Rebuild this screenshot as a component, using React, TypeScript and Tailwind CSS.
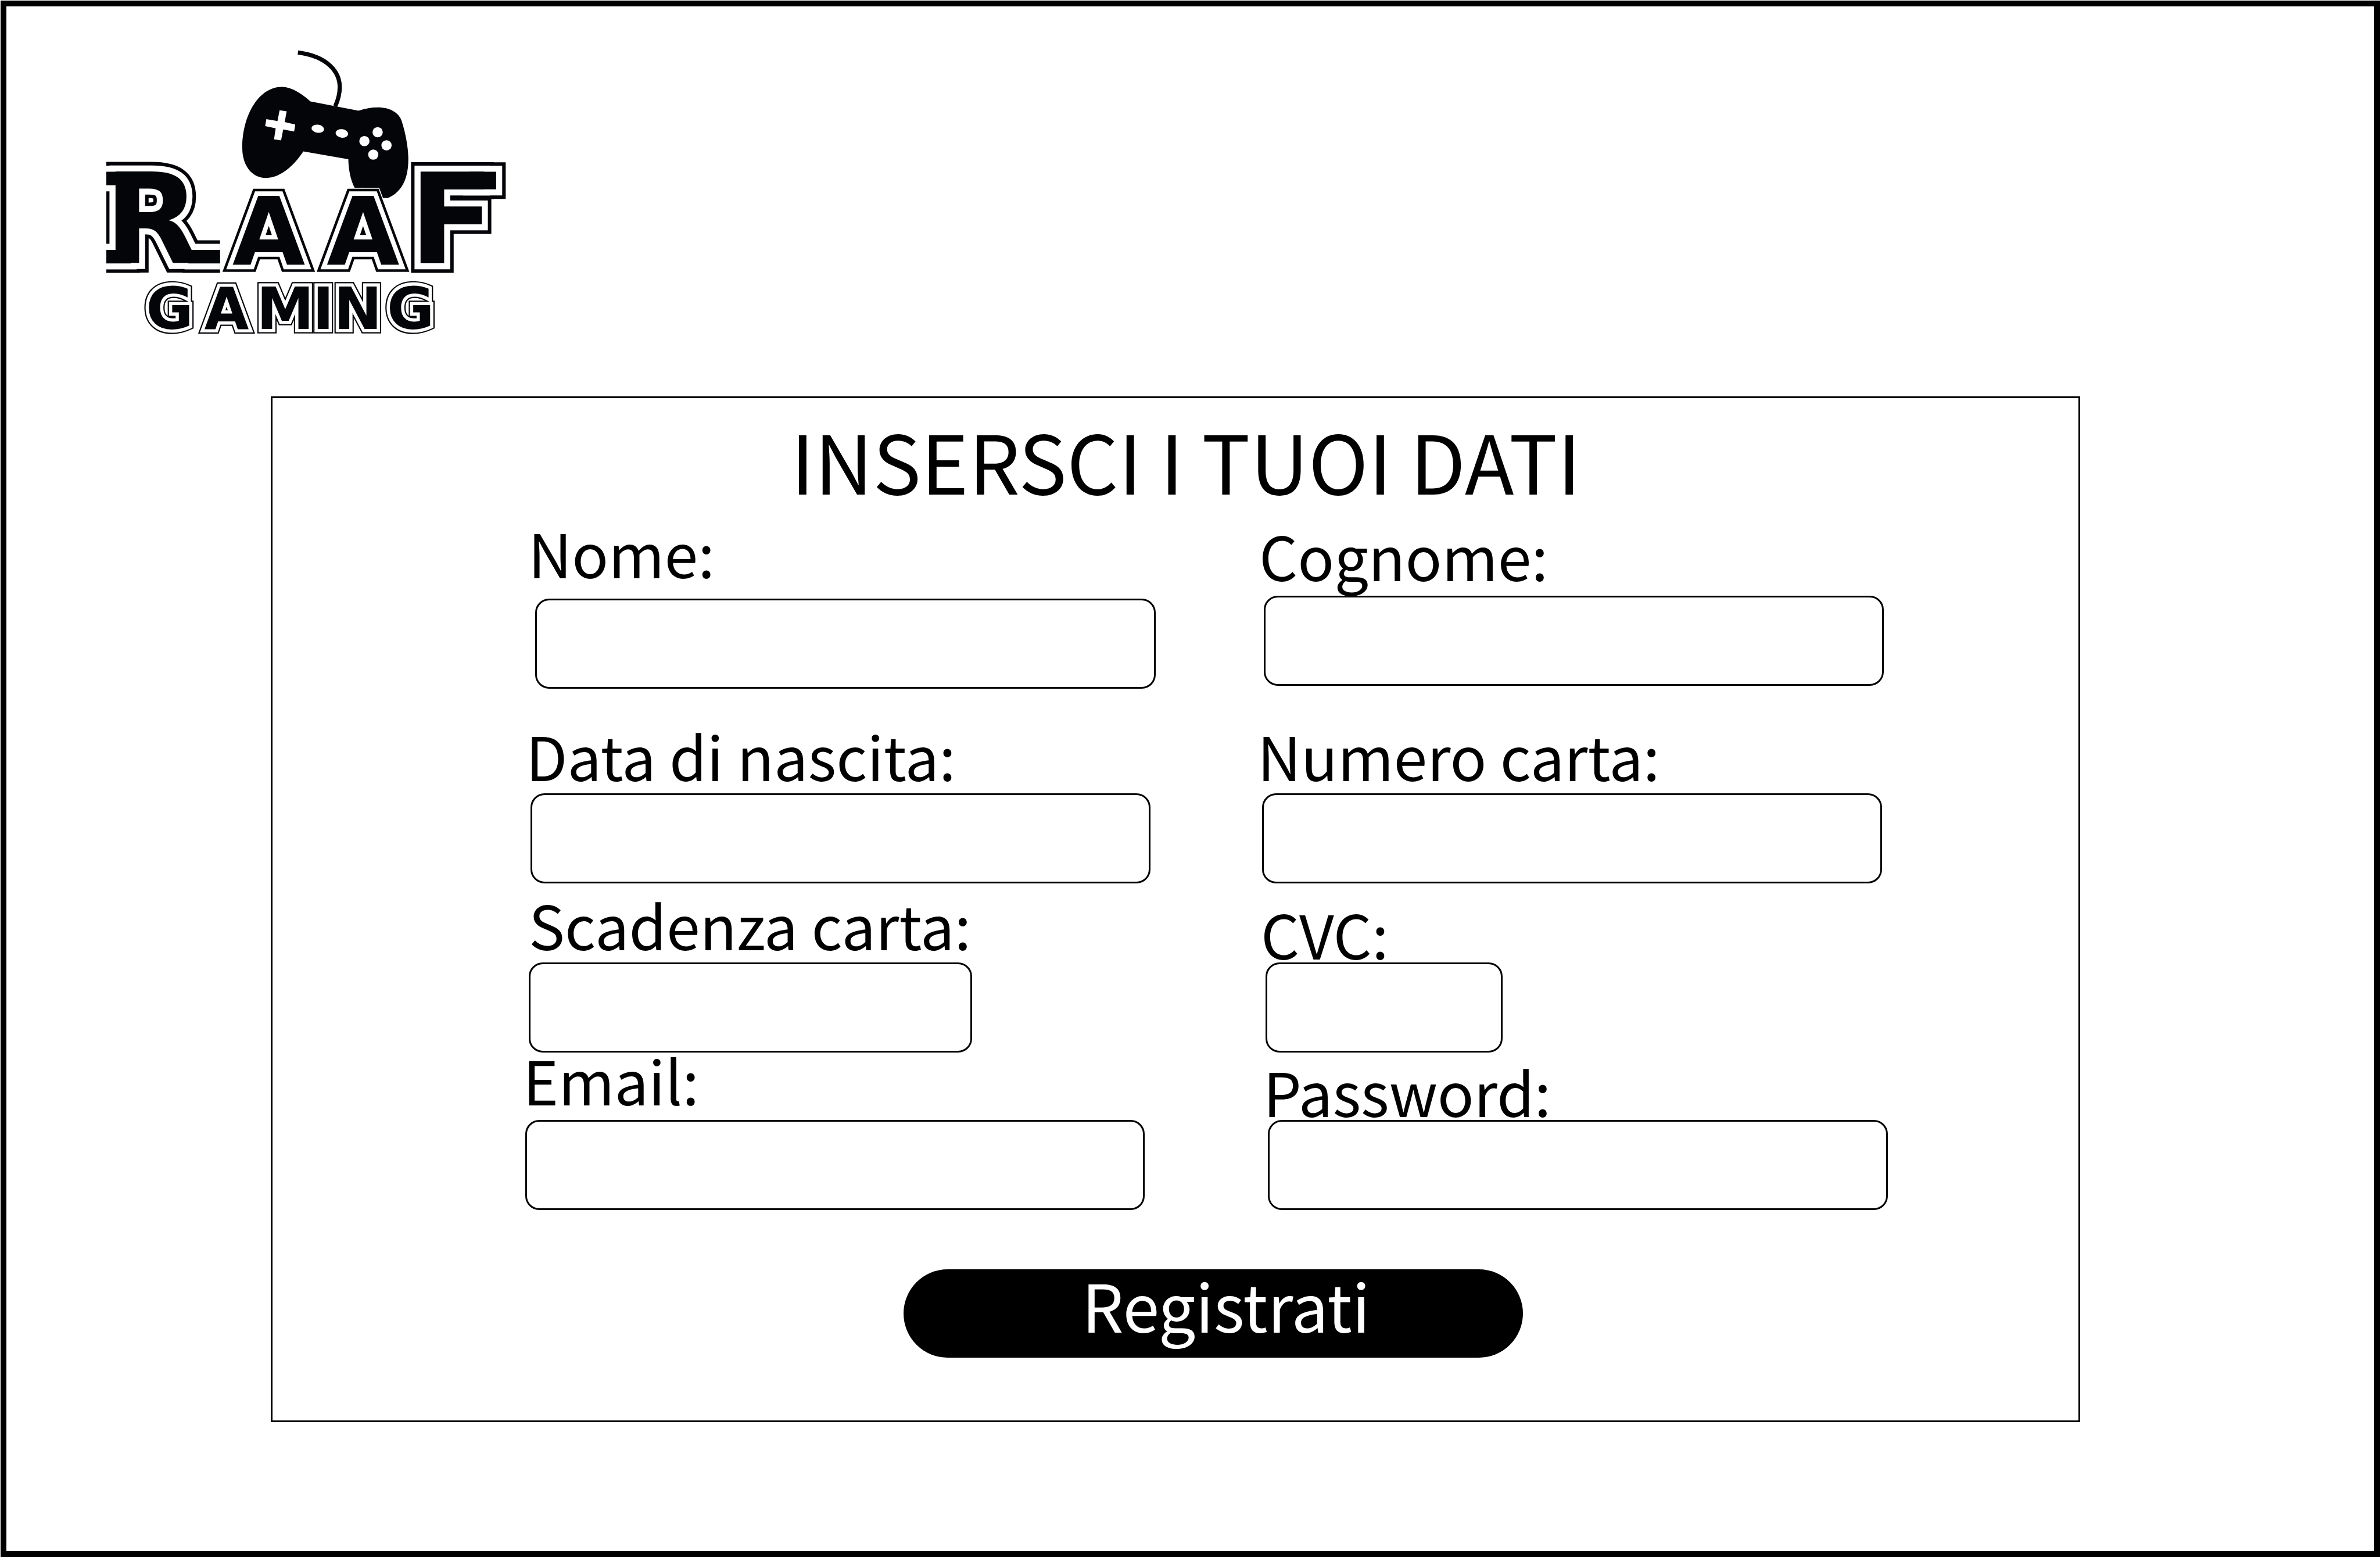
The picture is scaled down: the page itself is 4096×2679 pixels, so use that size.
import { useId } from "react";

const INK = "#040509";

function Gamepad() {
  return (
    <g transform="translate(500 90) scale(0.3333)">
      <path
        d="M482 80C680 105 760 210 760 310C760 350 750 395 730 437"
        fill="none"
        stroke={INK}
        strokeWidth="28"
      />
      <path
        fill={INK}
        d="M375 309C440 310 500 348 565 405L885 467C930 452 970 445 1012 445C1095 445 1150 480 1170 530C1200 620 1216 720 1216 790C1216 910 1180 1005 1080 1048L1050 1048C1000 1043 950 1025 925 1010L862 985C830 930 818 850 817 790L518 738C450 840 360 914 270 914C175 914 112 830 112 715C112 500 220 309 375 309Z"
      />
      <g fill="white">
        <polygon points="360,464 407,471 394,543 464,559 457,605 384,592 370,664 323,657 334,584 264,570 272,523 346,536" />
        <ellipse cx="614" cy="587" rx="42" ry="27" transform="rotate(8 614 587)" />
        <ellipse cx="774" cy="618" rx="42" ry="28" transform="rotate(8 774 618)" />
        <circle cx="1012" cy="610" r="34" />
        <circle cx="924" cy="669" r="34" />
        <circle cx="1071" cy="697" r="34" />
        <circle cx="983" cy="759" r="34" />
      </g>
    </g>
  );
}

function Logo() {
  return (
    <svg
      viewBox="236 110 886 632"
      role="img"
      aria-label="RAAF Gaming"
      className="w-[688px] h-[491px]"
    >
      <defs>
        <clipPath id="bars-edge">
          <rect x="236" y="340" width="252" height="280" />
        </clipPath>
        <g id="raaf">
          {/* Decorative bars that run off both sides of the first initial */}
          <path
            clipPath="url(#bars-edge)"
            d="M190 381H290V411H190ZM190 554H290V584H190ZM404 554H540V584H418Z"
            className="text-[278px] [stroke-width:var(--band)]"
          />
          <path
            d="M1040 381H1100V420H1040Z"
            className="text-[278px] [stroke-width:var(--band)]"
          />
          <text fontWeight="700" className="font-['DejaVu_Sans']">
            <tspan x="231" y="584" className="text-[278px] [stroke-width:var(--band)]">R</tspan>
            <tspan x="515" y="588" className="text-[209px] [stroke-width:var(--band)]">A</tspan>
            <tspan x="724" y="588" className="text-[209px] [stroke-width:var(--band)]">A</tspan>
            <tspan x="907" y="584" className="text-[278px] [stroke-width:var(--band)]">F</tspan>
          </text>
        </g>
        <text
          id="gaming"
          x="324 453 569 693 740 858"
          y="729"
          fontWeight="700"
          className="font-['DejaVu_Sans'] text-[128px] [stroke-width:var(--band)]"
        >
          GAMING
        </text>
      </defs>
      <Gamepad />
      <use href="#raaf" stroke="white" className="[--band:0.17em]" />
      <use href="#raaf" stroke={INK} className="[--band:0.152em]" />
      <use href="#raaf" stroke="white" className="[--band:0.096em]" />
      <use href="#raaf" fill={INK} />
      <use href="#gaming" stroke={INK} className="[--band:0.156em]" />
      <use href="#gaming" stroke="white" className="[--band:0.112em]" />
      <use href="#gaming" fill={INK} />
    </svg>
  );
}

type FieldProps = {
  label: string;
  type?: string;
  column: string;
  gap: string;
  indent: string;
};

function Field({ label, type = "text", column, gap, indent }: FieldProps) {
  const id = useId();
  return (
    <div className={`flex min-w-0 flex-col ${column} ${gap}`}>
      <label htmlFor={id} className="text-[104px] leading-[92px] whitespace-nowrap">
        {label}
      </label>
      <div className={`flex ${indent}`}>
        <input
          id={id}
          type={type}
          className="h-[155px] w-full min-w-0 rounded-3xl border-[3px] border-black bg-white px-8 text-[80px] outline-none"
        />
      </div>
    </div>
  );
}

export default function App() {
  return (
    <div className="flex min-h-screen bg-white pt-px pl-px font-['Noto_Sans_CJK_SC','Noto_Sans',sans-serif] text-black">
      <div className="flex-1 border-[10px] border-black">
        <header className="pt-[74px] pl-[172px]">
          <Logo />
        </header>
        <main className="mt-[106px] grid grid-cols-[455fr_3114fr_506fr]">
          <form
            className="col-start-2 border-[3px] border-black pt-9 pb-[108px]"
            onSubmit={(event) => event.preventDefault()}
          >
            <h1 className="pl-9 text-center text-[139px] leading-[140px] whitespace-nowrap">
              INSERSCI I TUOI DATI
            </h1>
            <div className="mt-[43px] grid grid-cols-[440fr_1080fr_178fr_1075fr_335fr] items-center">
              <Field label="Nome:" column="col-start-2" gap="gap-[34px]" indent="pl-3" />
              <Field label="Cognome:" column="col-start-4" gap="gap-6" indent="pl-2" />
            </div>
            <div className="mt-[68px] grid grid-cols-[436fr_1075fr_184fr_1075fr_338fr] items-end">
              <Field label="Data di nascita:" column="col-start-2" gap="gap-5" indent="pl-2" />
              <Field label="Numero carta:" column="col-start-4" gap="gap-5" indent="pl-2" />
            </div>
            <div className="mt-6 grid grid-cols-[441fr_763fr_497fr_416fr_991fr] items-end">
              <Field label="Scadenza carta:" column="col-start-2" gap="gap-5" indent="pl-0" />
              <Field label="CVC:" column="col-start-4" gap="gap-1" indent="pl-2" />
            </div>
            <div className="grid grid-cols-[431fr_1070fr_204fr_1075fr_328fr] items-end">
              <Field label="Email:" type="email" column="col-start-2" gap="gap-6" indent="pl-1" />
              <Field label="Password:" type="password" column="col-start-4" gap="gap-1" indent="pl-2" />
            </div>
            <div className="mt-[102px] grid grid-cols-[1086fr_1066fr_956fr]">
              <button
                type="submit"
                className="col-start-2 h-[152px] rounded-full bg-black pb-8 pl-11 text-[113px] leading-[120px] text-white"
              >
                Registrati
              </button>
            </div>
          </form>
        </main>
      </div>
    </div>
  );
}
